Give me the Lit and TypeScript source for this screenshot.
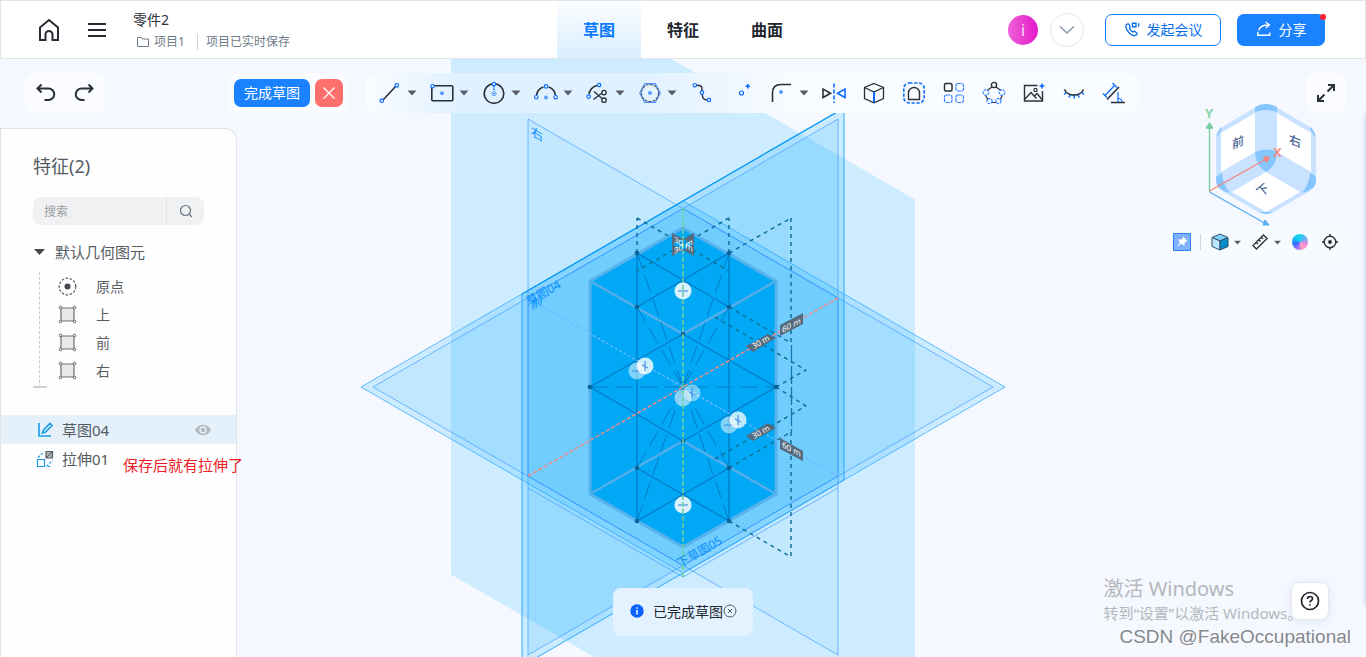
import { LitElement, html, svg, css } from "lit";
import { customElement } from "lit/decorators.js";
import { classMap } from "lit/directives/class-map.js";

const B = "#0a6cff";
const K = "#2b3038";

const dot = (x: number, y: number, r = 1.7) => svg`<circle cx=${x} cy=${y} r=${r} fill="#fff" stroke=${B} stroke-width="1.2"/>`;
const soft = (x: number, y: number) => svg`<circle cx=${x} cy=${y} r="2" fill="#5b9dfb" stroke="none"/>`;

interface Tool { name: string; label: string; menu?: boolean; art: unknown }

const tools: Tool[] = [
  { name: "line", label: "直线", menu: true, art: svg`<path d="M5 19 18 5"/>${dot(3.7, 19.8)}${dot(18.8, 4.4)}` },
  { name: "rect", label: "矩形", menu: true, art: svg`<rect x="1.8" y="4.8" width="21" height="15" rx="1"/>${soft(12, 12.2)}${dot(2.5, 5.2)}` },
  { name: "circle", label: "圆", menu: true, art: svg`<circle cx="12" cy="12.6" r="9.8"/><path d="M12 5v5" stroke=${B} stroke-dasharray="1.5 1"/>${dot(12, 3)}<circle cx="12" cy="12.6" r="2.1" stroke="#5b9dfb" stroke-width="1"/><circle cx="12" cy="12.6" r=".8" fill=${B} stroke="none"/>` },
  { name: "arc", label: "圆弧", menu: true, art: svg`<path d="M2.6 14A9.8 9.8 0 0 1 9.5 6M14.5 6a9.8 9.8 0 0 1 6.9 8"/>${dot(12, 5.4)}${dot(2.3, 16.2)}${dot(21.7, 16.2)}${soft(12, 16.4)}` },
  { name: "trim", label: "修剪", menu: true, art: svg`<path d="M3 13A11 11 0 0 1 11 4.6"/>${dot(13.2, 4)}${dot(2.6, 15.6)}<path d="m8 10.5 8 7M7.5 18.5 16 12" stroke-width="1.3"/><circle cx="18" cy="11.6" r="2.2" stroke-width="1.3"/><circle cx="18" cy="19.2" r="2.2" stroke-width="1.3"/>` },
  { name: "polygon", label: "多边形", menu: true, art: svg`<path d="M6.8 2.6h10.4l5 9.4-5 9.4H6.8L1.800 12Z" stroke="#4a93ff" stroke-width="1.3"/><circle cx="12" cy="12" r="8.6" stroke="#555c66" stroke-dasharray="3 1" stroke-width="1.2"/>${soft(12, 12)}` },
  { name: "spline", label: "样条", art: svg`<path d="M6 4.2c8 0 5.5 3 6 7.500C12.500 17 13 19 18 19" stroke-width="1.4"/>${dot(4.8, 4.2)}${dot(12, 11.6)}${dot(19, 19)}` },
  { name: "point", label: "点", art: svg`${dot(11.5, 12, 2)}<path d="M17.8 3v4.500M15.500 5.200H20" stroke=${B} stroke-width="1.6"/>` },
  { name: "fillet", label: "圆角", menu: true, art: svg`<path d="M2.500 21V12Q2.500 3.500 11 3.500h10"/>${soft(11, 11)}` },
  { name: "mirror", label: "镜像", art: svg`<path d="M1 8v8.500L8.500 12.200Z"/><path d="M23 8v8.500l-7.500-4.300Z" stroke=${B}/><path d="M12 2.500v19.500" stroke=${B} stroke-dasharray="4 2"/>` },
  { name: "solid", label: "投影", art: svg`<path d="M12 2.500 21.500 6.500v11L12 21.800 2.500 17.500v-11ZM2.500 6.500 12 11l9.500-4.500" stroke-width="1.300"/><path d="M12 11v10.500" stroke=${B} stroke-width="2"/>` },
  { name: "offset", label: "偏移", art: svg`<rect x="1.800" y="2" width="20.400" height="20" rx="5.500" stroke=${B} stroke-width="1.700" stroke-dasharray="3.200 1.700"/><path d="M6.500 18.500V12a5.500 5.500 0 0 1 11 0v6.500Z" stroke-width="1.400"/>` },
  { name: "pattern", label: "线性阵列", art: svg`<rect x="2.500" y="2.500" width="7.500" height="7.500" rx="1.500" stroke-width="1.500"/><g stroke="#2f7fff" stroke-width="1.200" stroke-dasharray="3.600 .8"><rect x="14" y="2.500" width="7.500" height="7.500" rx="2"/><rect x="2.500" y="14" width="7.500" height="7.500" rx="2"/><rect x="14" y="14" width="7.500" height="7.500" rx="2"/></g>` },
  { name: "polar", label: "圆周阵列", art: svg`<path d="M10 6 5 9.500M14 6l5 3.500M3.500 14 6 19M20.500 14 18 19M9.500 21.500h5" stroke-width="1.200"/><circle cx="12" cy="4" r="2.600" stroke-width="1.400"/><g stroke="#3b87ff" stroke-width="1.200" stroke-dasharray="2.600 .8"><circle cx="4" cy="11.500" r="2.800"/><circle cx="20" cy="11.500" r="2.800"/><circle cx="7.500" cy="20" r="2.600"/><circle cx="16.500" cy="20" r="2.600"/></g>` },
  { name: "image", label: "图片", art: svg`<path d="M15.500 4.500H2.500v15.500h18V10" stroke-width="1.400"/><path d="m3 18 6-6.500 5.500 6M12 15.500l3-3 5 6" stroke-width="1.400"/><circle cx="13.500" cy="9" r="1.600" stroke-width="1.200"/><path d="M20 2.500v5M17.500 5h5" stroke=${B}/>` },
  { name: "hide", label: "隐藏", art: svg`<path d="M2.500 8.500c3.500 7.500 15.500 7.500 19 0"/><path d="m4 11.500-2 2M8 14l-1 2.500M12.200 14.500v3M16.200 14l1 2.500M20 11.500l2 2" stroke=${B} stroke-width="1.500"/>` },
  { name: "measure", label: "尺寸", art: svg`<path d="m5 18.500 12-12.500M9 21.500h14"/><path d="m3 14.500 10-10.500M1 12.500l4 4M10.500 2l4.500 4.500M16 11v10M16 17q4 1 4 4" stroke=${B} stroke-width="1.200"/>` },
];

const caret = html`<svg class="caret" viewBox="0 0 12 12" aria-hidden="true"><path d="M1.500 3.500h9L6 8.500Z" /></svg>`;

const seg = (pts: number[][]) => pts.map(([a, b, c, d]) => `M${a} ${b}L${c} ${d}`).join("");

const nodes = [
  [637, 253], [729, 253], [637, 307], [729, 307], [683, 334], [590, 387],
  [776, 387], [683, 441], [637, 468], [729, 468], [637, 521], [729, 521],
];

const edges = seg([
  [637, 253, 637, 521], [729, 253, 729, 521], [637, 253, 729, 307], [729, 253, 637, 307],
  [590, 387, 683, 334], [683, 334, 776, 387], [590, 387, 683, 441], [683, 441, 776, 387],
  [637, 468, 729, 521], [729, 468, 637, 521],
]);

const guides = seg([
  [683, 387, 637, 253], [683, 387, 729, 253], [683, 387, 637, 307], [683, 387, 729, 307],
  [683, 387, 637, 468], [683, 387, 729, 468], [683, 387, 637, 521], [683, 387, 729, 521],
  [590, 387, 776, 387],
]);

const dims = seg([
  [637, 253, 637, 218], [637, 218, 729, 271], [729, 253, 729, 218], [729, 218, 637, 271],
  [729, 253, 791, 218], [791, 218, 791, 345], [729, 307, 791, 343],
  [715, 317, 806, 370], [776, 387, 806, 370], [776, 387, 806, 406], [715, 459, 806, 406],
  [729, 468, 791, 432], [791, 432, 791, 557], [729, 521, 791, 557],
]);

const marks: [number, number, number, string][] = [
  [637, 371, 0.5, "h"], [645, 366, 0.8, "v"], [692, 393, 0.45, "v"], [683, 398, 0.55, ""],
  [729, 425, 0.5, "h"], [738, 420, 0.75, "v"], [683, 291, 0.85, "h"], [683, 505, 0.85, "h"],
];

const scene = svg`
  <g fill="#00aaff">
    <path d="M451-68 915 199.500V842L451 574.500Z" fill-opacity=".155"/>
    <path d="M528 119 838 298V655L528 476Z" fill-opacity=".055"/>
    <g stroke="#2fa8fb" stroke-width="1">
      <path d="M522 294 844 108V480L522 666Z" fill-opacity=".17"/>
      <path d="M361 387 683 201l322 186L683 573Z" fill-opacity=".16" stroke-opacity=".75"/>
    </g>
    <path d="M528 298 838 119V476L528 655Z" fill-opacity=".1"/>
    <path d="M373 387 683 208.500 993 387 683 565.500Z" fill-opacity=".055"/>
  </g>
  <g fill="none" stroke="#2b93ff" stroke-opacity=".6">
    <path d="M528 119 838 298V655L528 476Z"/>
    <path d="M528 298 838 119V476L528 655Z"/>
    <path d="M373 387 683 208.500 993 387 683 565.500Z"/>
    <path d="M528 488 683 577 838 488"/>
  </g>
  <path d="M522 294 844 108" stroke="#0e9cf5" stroke-width="1.300"/>
  <path d="M683 228 776 281V494L683 547 590 494V281Z" fill="#00a8f5" stroke="#55b2ec" stroke-width="3"/>
  <path d="M590 281 683 334 776 281M590 494 683 441 776 494" fill="none" stroke="#55aee9" stroke-width="2.500"/>
  <path d=${edges} stroke="#067cc4" stroke-width="1.300" fill="none"/>
  <path d=${guides} stroke="#067cc4" stroke-width="1" stroke-dasharray="18 7" fill="none"/>
  <path d="M791.500 345V432" stroke="#0f79b0" stroke-width="1.300" stroke-dasharray="18 3"/>
  <path d=${dims} stroke="#0f7399" stroke-width="1.500" stroke-dasharray="4 4" fill="none"/>
  <path d="M528 298 838 476" stroke="#6fb9ff" stroke-width="1.300" stroke-dasharray="3 2"/>
  ${nodes.map(([x, y]) => svg`<circle cx=${x} cy=${y} r="2.300" fill="#07639c"/>`)}
  ${marks.map(([x, y, o, k]) => svg`
    <circle cx=${x} cy=${y} r="8.500" fill="#fff" fill-opacity=${o}/>
    ${k ? svg`<path d=${k === "h" ? `M${x - 5} ${y}h10` : `M${x} ${y - 5}v10M${x - 3} ${y - 1}l6 3`} stroke="#4a93e0" stroke-width="1.200"/>` : null}`)}
  <path d="M528 476 838 298" stroke="#f58a83" stroke-width="1.500" stroke-dasharray="4 2"/>
  <path d="M683 208V577" stroke="#6fd09c" stroke-width="1.600" stroke-dasharray="5 2"/>
  <g fill="#566b7e">
    <path d="m672 233 22 12v11l-22-12ZM672 256l22-12v-11l-22 12Z"/>
    <path d="M780 325 803 313v11l-23 12Z"/>
    <path d="m746 346 22-12 8 4-23 14Z"/>
    <path d="m746 436 22-13 8 5-23 13Z"/>
    <path d="m780 438 23 13v10l-23-12Z"/>
  </g>
  <g class="dim">
    <text transform="translate(674 242) skewY(28)">30 m</text>
    <text transform="translate(674 254) skewY(-28)">30 m</text>
    <text transform="translate(782 333) skewY(-28)">60 m</text>
    <text transform="translate(782 447) skewY(28)">60 m</text>
    <text transform="translate(754 349) rotate(-30)">30 m</text>
    <text transform="translate(754 439) rotate(-30)">30 m</text>
  </g>
  <g class="plane">
    <text transform="translate(531 135) skewY(30)">右</text>
    <text transform="translate(531 310) skewY(-30)">前</text>
    <text transform="translate(529 306) rotate(-30)">草图04</text>
    <text transform="translate(680 568) rotate(-30)">下草图05</text>
  </g>`;

const cube = svg`
  <path d="M1265 104q6 0 11 3l34 20q6 4 6 11v42q0 7-6 11l-36 21q-8 3-16 0l-36-21q-6-4-6-11v-42q0-7 6-11l34-20q4-3 9-3Z" fill="#c9e2ff"/>
  <path d="M1255 107q10-6 22 0v5q-11-4-22 0ZM1217 134l4-7 1 2-5 8ZM1315 134l-4-7-1 2 5 8ZM1259 212q7 4 14 0Z" fill="#85c6ff"/>
  <path d="M1216 177q3-3 6-4 1 12 8 20-7-2-12-6-2-3-2-10ZM1316 177q-3-3-6-4-1 12-8 20 7-2 12-6 2-3 2-10Z" fill="#85c6ff"/>
  <path d="M1221 133 1255 113v39l-34 20ZM1311 133l-34-20v39l34 20ZM1232 192l34-20 34 20-34 20Z" fill="#fff"/>
  <path d="M1255 152q11-5 22 0 0 13-11 20-11-7-11-20Z" fill="#85c6ff"/>
  <g class="face">
    <text transform="translate(1232 149) skewY(-22)">前</text>
    <text transform="translate(1289 143) skewY(22)">右</text>
    <text transform="translate(1261 197) rotate(-40)">下</text>
  </g>
  <path d="M1209.500 192V126" stroke="#74d09d" stroke-width="1.400"/><path d="m1209.500 122 4 6-2 1h-4l-2-1Z" fill="#74d09d"/>
  <path d="m1209.500 191 55-31" stroke="#f4857e" stroke-width="1.400"/><path d="m1270 157-7-1 1 4 3 3Z" fill="#f4857e"/>
  <path d="m1209.500 192 55 31" stroke="#57aef5" stroke-width="1.400"/><path d="m1265 220-2 5h6Z" stroke="#57aef5" fill="#57aef5"/>
  <text class="axis" x="1205" y="118" fill="#8bd3ab">Y</text>
  <text class="axis" x="1273" y="157" fill="#f08f8c">X</text>`;

@customElement("app-header")
class AppHeader extends LitElement {
  static styles = css`
    :host { display: block; }
    * { box-sizing: border-box; }
    header { display: grid; grid-template-columns: 1fr auto 1fr; height: 59px; background: #fff; border: 1px solid #e3e4e6; }
    button, a { font: inherit; color: inherit; border: 0; background: none; padding: 0; cursor: pointer; text-decoration: none; }
    svg { fill: none; stroke: #262b33; stroke-width: 2; display: block; }
    .left { display: flex; align-items: center; padding-left: 36px; }
    .ico { width: 24px; height: 24px; margin-right: 24px; }
    .doc { padding-top: 2px; }
    .name { font-size: 14px; line-height: 22px; color: #2d3239; }
    .meta { display: flex; align-items: center; font-size: 12px; line-height: 22px; color: #6f7b88; }
    .meta svg { width: 12px; height: 12px; margin: 0 5px 0 4px; stroke: #6f7b88; stroke-width: 1; }
    .saved { margin-left: 12px; padding-left: 8px; border-left: 1px solid #cfd3d8; line-height: 16px; }
    nav { display: flex; }
    .tab { width: 84px; padding-bottom: 2px; display: flex; align-items: center; justify-content: center; font-size: 16px; font-weight: 700; color: #22262d; }
    .tab.on { color: #0a7aff; background: linear-gradient(#fbfdff, #d9eeff); }
    .right { display: flex; align-items: center; justify-content: flex-end; padding-right: 40px; }
    .avatar { width: 30px; height: 30px; border-radius: 50%; background: linear-gradient(90deg, #ee60d6, #e31bcb); color: #f8dcf5; font-size: 16px; text-align: center; line-height: 30px; }
    .more { width: 34px; height: 34px; border: 1px solid #e3e7ee; border-radius: 50%; margin: 0 21px 0 12px; display: grid; place-items: center; }
    .more svg { width: 16px; height: 16px; stroke: #8698ad; stroke-width: 1.5; }
    .btn { display: flex; align-items: center; justify-content: center; height: 32px; padding: 0 0 2px; border-radius: 7px; font-size: 14px; gap: 7px; }
    .btn svg { width: 16px; height: 16px; stroke: currentColor; stroke-width: 1.5; }
    .meet { width: 116px; border: 1px solid #0a7aff; color: #0a6fe8; }
    .share { width: 88px; background: #1b82ff; color: #fff; margin-left: 16px; position: relative; }
    .badge { position: absolute; top: 0; right: -1px; width: 6px; height: 6px; border-radius: 50%; background: #ff1f2d; }
  `;
  render() {
    return html`<header>
      <div class="left">
        <a class="ico" href="#" aria-label="主页"><svg viewBox="0 0 24 24"><path d="M3 9.500 12 2l9 7.500V22h-5.500v-5.500a3.500 3.500 0 0 0-7 0V22H3Z"/></svg></a>
        <button class="ico" aria-label="菜单"><svg viewBox="0 0 24 24"><path d="M3 6h18M3 12h18M3 18h18"/></svg></button>
        <div class="doc">
          <div class="name">零件2</div>
          <div class="meta"><svg viewBox="0 0 12 12"><path d="M.500 1.500h4l1 1.500h6v7.500H.500Z"/></svg>项目1<span class="saved">项目已实时保存</span></div>
        </div>
      </div>
      <nav>
        ${["草图", "特征", "曲面"].map((t, i) => html`<a href="#" class=${classMap({ tab: true, on: i === 0 })}>${t}</a>`)}
      </nav>
      <div class="right">
        <div class="avatar">i</div>
        <button class="more" aria-label="更多"><svg viewBox="0 0 16 16"><path d="m1 4.500 7 6.500 7-6.500"/></svg></button>
        <button class="btn meet"><svg viewBox="0 0 18 18"><path d="M3.500 3.500C1 5 2 9 5 12.500s6.500 5 9 3c1-.900.800-1.500 0-2.300l-1.700-1.400c-.800-.600-1.400-.300-2.300.500C8.500 11.800 6.500 9.500 6 8.200c1-.8 1.200-1.300.8-2.200l-1-2c-.5-.8-1.300-1-2.300-.5Z"/><path d="M9.500 2.500h4v4h-4ZM16.500 2.500v4"/></svg>发起会议</button>
        <button class="btn share"><svg viewBox="0 0 18 18"><path d="M2 12v4h13.500v-3M3 10.500c1-4 4.500-6 11.500-6M11 1l4 3.500L11 8"/></svg>分享<span class="badge"></span></button>
      </div>
    </header>`;
  }
}

@customElement("feature-panel")
class FeaturePanel extends LitElement {
  static styles = css`
    :host { display: block; box-sizing: border-box; background: rgba(255, 255, 255, 0.85); border: 1px solid #e0e2e6; border-bottom: 0; border-top-right-radius: 12px; color: #555b61; }
    * { box-sizing: border-box; }
    svg { display: block; flex: none; }
    h2 { margin: 23px 0 17px 32px; font-size: 18px; line-height: 28px; font-weight: 400; }
    .search { display: flex; height: 28px; margin: 0 32px; background: #f0f1f3; border-radius: 8px; overflow: hidden; }
    input { flex: 1; min-width: 0; border: 0; background: none; padding: 0 11px; font: inherit; font-size: 12px; outline: 0; }
    input::placeholder { color: #9b9fa5; opacity: 1; }
    .go { width: 38px; border: 0; border-left: 1px solid #dfe2e6; background: none; display: grid; place-items: center; padding: 0; }
    .go svg { width: 14px; height: 14px; fill: none; stroke: #667587; stroke-width: 1.2; }
    .group { display: flex; align-items: center; gap: 10px; margin: 15px 0 8px 32px; font-size: 15px; line-height: 24px; }
    .group svg { width: 12px; height: 12px; fill: #444a50; }
    .tree { margin: 0 0 27px 38px; padding: 0 0 4px; list-style: none; border-left: 1px dashed #c9cccf; position: relative; }
    .tree::after { content: ""; position: absolute; left: -7px; bottom: 0; width: 14px; height: 2px; background: #cdd0d3; }
    .tree li { display: flex; align-items: center; gap: 19px; height: 28px; padding-left: 18px; font-size: 14px; }
    .tree svg { width: 19px; height: 19px; }
    .steps { margin: 0; padding: 0; list-style: none; }
    .steps li { display: flex; align-items: center; height: 29px; padding: 0 24px 0 35px; gap: 8px; font-size: 15px; }
    .steps li.on { background: #e4f1fb; }
    .steps svg { width: 18px; height: 18px; fill: none; stroke: #1b9de8; stroke-width: 1.4; }
    .steps .eye { margin-left: auto; fill: #b3b8bd; stroke: none; }
  `;
  render() {
    const face = svg`<path d="M3 3h13v13H3Z" fill="#e8eaea" stroke="#6d7173" stroke-width="1.200"/><g fill="#fff" stroke="#5b5f62"><circle cx="2.500" cy="2.500" r="1.300"/><circle cx="16.500" cy="2.500" r="1.300"/><circle cx="2.500" cy="16.500" r="1.300"/><circle cx="16.500" cy="16.500" r="1.300"/></g>`;
    const origin = svg`<circle cx="9.500" cy="9.500" r="8.300" fill="none" stroke="#555b61" stroke-width="1.200" stroke-dasharray="2.500 1.600"/><circle cx="9.500" cy="9.500" r="3" fill="#444a50"/>`;
    return html`
      <h2>特征(2)</h2>
      <div class="search">
        <input type="text" placeholder="搜索" aria-label="搜索" />
        <button class="go" aria-label="搜索"><svg viewBox="0 0 14 14"><circle cx="6.500" cy="6.500" r="5"/><path d="m10.500 10.500 2.500 2.500"/></svg></button>
      </div>
      <div class="group"><svg viewBox="0 0 12 12"><path d="M1 3h11L6.500 9Z"/></svg>默认几何图元</div>
      <ul class="tree">
        ${["原点", "上", "前", "右"].map((t, i) => html`<li><svg viewBox="0 0 19 19">${i ? face : origin}</svg>${t}</li>`)}
      </ul>
      <ul class="steps">
        <li class="on"><svg viewBox="0 0 18 18"><path d="M3 2v13h12M6.500 12l1-3 6.500-6.500 2 2L9.500 11Z" stroke-width="1.600"/></svg>草图04
          <svg class="eye" viewBox="0 0 18 18"><path d="M1 9c3.500-7 12.500-7 16 0-3.500 7-12.500 7-16 0Z"/><circle cx="9" cy="9" r="3.700" fill="#e4f1fb"/><circle cx="9" cy="9" r="2.200"/></svg></li>
        <li><svg viewBox="0 0 18 18"><path d="M1.500 9.500h7v7h-7Z" stroke-width="1.200"/><path d="M10 1.500h6.500V8H10Z" fill="#aab2b8" stroke="#555b61" stroke-width="1.200"/><path d="M2 7.500 8 2M10.500 16.500l6-6M12 16.500h4" stroke-dasharray="2.500 1.500" stroke-width="1.200"/><path d="M10 8l6-6" stroke="#555b61" stroke-width="1"/></svg>拉伸01</li>
      </ul>`;
  }
}

@customElement("app-root")
class AppRoot extends LitElement {
  static styles = css`
    :host { display: flex; flex-direction: column; height: 100vh; overflow: hidden; background: #f5f8ff; font-family: "Noto Sans", "Noto Sans CJK SC", sans-serif; }
    * { box-sizing: border-box; }
    button { font: inherit; border: 0; background: none; padding: 0; cursor: pointer; }
    .stage { flex: 1; position: relative; min-height: 0; overflow: hidden; display: flex; flex-direction: column; }
    .scene { position: absolute; inset: 0; width: 100%; height: 100%; }
    .dim { fill: #fff; font-size: 8px; }
    .plane { fill: #0a90fb; font-size: 12px; }
    .face { fill: #4b6795; font-size: 12px; font-weight: 500; }
    .axis { font-size: 13px; font-weight: 700; }
    .bar { position: relative; display: flex; padding: 14px 20px 0 25px; }
    .box { display: flex; align-items: center; height: 40px; border-radius: 10px; background: rgba(255, 255, 255, 0.6); }
    .history { width: 80px; justify-content: space-around; padding: 0 2px; }
    .history svg, .full svg { width: 22px; height: 22px; display: block; fill: none; stroke: #2b3038; stroke-width: 2; }
    .finish { margin-left: 124px; padding: 0 5px; gap: 5px; }
    .done { width: 76px; height: 28px; padding-bottom: 2px; border-radius: 7px; background: #1b82ff; color: #fff; font-size: 14px; }
    .cancel { width: 28px; height: 28px; border-radius: 7px; background: #ff6f6b; display: grid; place-items: center; }
    .cancel svg { width: 14px; height: 14px; stroke: #fff; stroke-width: 1.3; }
    .tools { margin-left: 18px; padding: 0 4px; background: linear-gradient(90deg, #fafcff, #e0f1ff 12%, #e0f1ff 35%, #f8fbff 55%); }
    .tool { display: flex; align-items: center; width: 40px; padding: 0 8px; height: 40px; }
    .tool.menu { width: 52px; padding-right: 4px; gap: 4px; }
    .tool > svg:first-child { width: 24px; height: 24px; fill: none; stroke: #2b3038; stroke-width: 1.6; flex: none; }
    .caret { width: 12px; height: 12px; fill: #575d66; flex: none; }
    .full { width: 40px; justify-content: center; margin-left: auto; }
    .views { position: absolute; right: 20px; top: 167px; height: 32px; display: flex; align-items: center; padding: 0 7px; background: rgba(246, 251, 255, 0.9); border-radius: 8px; }
    .views button { display: flex; align-items: center; height: 32px; }
    .views button > svg:first-child { width: 18px; height: 18px; display: block; }
    .views .caret { width: 9px; height: 9px; }
    .drop { gap: 4px; margin-right: 9px; }
    .pin { margin-right: 9px; }
    .rule { width: 1px; height: 16px; background: #d3d8de; margin-right: 10px; }
    .wheel { width: 16px; height: 16px; border-radius: 50%; background: conic-gradient(#19d7f0, #62aef5, #f08be0, #ff9fc0 45%, #a070f5 55%, #2a6cff 70%, #12c9f8 85%, #19d7f0); margin: 0 13px 0 1px; }
    .panel { position: relative; width: 237px; margin-top: 15px; flex: 1; min-height: 0; }
    .note { position: absolute; left: 123px; top: 395px; margin: 0; font-size: 15px; line-height: 22px; color: #ee1c25; }
    .toast { position: absolute; left: 50%; transform: translateX(-50%); bottom: 21px; height: 48px; padding: 0 16px 2px; display: flex; align-items: center; border-radius: 8px; background: #e4f2ff; color: #20252c; font-size: 14px; white-space: nowrap; }
    .toast svg { width: 14px; height: 14px; display: block; }
    .toast .info { margin-right: 8px; width: 16px; height: 16px; }
    .marks { position: absolute; right: 15px; bottom: 8px; text-align: left; color: #b4b7bc; white-space: nowrap; display: flex; flex-direction: column; }
    .marks p { margin: 0; }
    .m1 { font-size: 20px; line-height: 24px; }
    .m2 { font-size: 15px; line-height: 24px; }
    .m3 { font-family: "Liberation Sans", sans-serif; font-size: 19px; line-height: 24px; color: #85888d; text-shadow: 1px 1px 0 #fff; padding-left: 16px; }
    .help { position: absolute; right: 37px; bottom: 37px; width: 38px; height: 38px; background: #fff; border: 1px solid #e6e8ec; border-radius: 8px; display: grid; place-items: center; box-shadow: 0 2px 8px rgba(70, 110, 180, 0.12); }
    .help svg { width: 20px; height: 20px; fill: none; stroke: #20252c; stroke-width: 1.7; }
    .drawer { position: absolute; right: -4px; top: 54px; bottom: 52px; width: 4px; box-shadow: -1px 0 4px rgba(80, 150, 220, 0.3); }
  `;
  render() {
    return html`
      <app-header></app-header>
      <main class="stage">
        <svg class="scene" viewBox="0 59 1366 598" preserveAspectRatio="xMidYMid slice">${scene}</svg>
        <svg class="scene" viewBox="0 59 1366 598" preserveAspectRatio="xMaxYMin slice">${cube}</svg>
        <div class="bar">
          <div class="box history">
            <button aria-label="撤销"><svg viewBox="0 0 22 22"><path d="M6.500 2.500 2.500 6.500l4 4M3 6.500h10.500a5.500 5.500 0 0 1 0 11.500H9.500"/></svg></button>
            <button aria-label="重做"><svg viewBox="0 0 22 22"><path d="m15.500 2.500 4 4-4 4M19 6.500H8.500a5.500 5.500 0 0 0 0 11.500h3"/></svg></button>
          </div>
          <div class="box finish">
            <button class="done">完成草图</button>
            <button class="cancel" aria-label="取消"><svg viewBox="0 0 14 14"><path d="m1.500 1.500 11 11M12.500 1.500l-11 11"/></svg></button>
          </div>
          <div class="box tools">
            ${tools.map((t) => html`<button class=${classMap({ tool: true, menu: !!t.menu })} aria-label=${t.label}><svg viewBox="0 0 24 24">${t.art}</svg>${t.menu ? caret : null}</button>`)}
          </div>
          <button class="box full" aria-label="全屏"><svg viewBox="0 0 22 22"><path d="M13 3h6v6M18.500 3.500l-6 6M9 19H3v-6M3.500 18.500l6-6"/></svg></button>
        </div>
        <feature-panel class="panel"></feature-panel>
        <p class="note">保存后就有拉伸了</p>
        <div class="views">
          <button class="pin" aria-label="固定"><svg viewBox="0 0 18 18"><path d="M.500.500h17v17H.500Z" fill="#80b1ff" stroke="#2a84ff"/><path d="m10 3.500 4.500 4.500-1.500.500-1.500 1.500v3l-3-2.500L4 14l3-4.500L5 6.500h3.500L10 5Z" fill="#fff"/></svg></button>
          <span class="rule"></span>
          <button class="drop" aria-label="显示"><svg viewBox="0 0 18 18" stroke="#355064" stroke-linejoin="round"><path d="m9 1 8 3.500L9 8 1 4.500Z" fill="#7ed0fa"/><path d="M1 4.500 9 8v9l-8-3.500Z" fill="#b8e6ff"/><path d="M17 4.500 9 8v9l8-3.500Z" fill="#0a8bcc"/></svg>${caret}</button>
          <button class="drop" aria-label="测量"><svg viewBox="0 0 18 18" fill="none" stroke=${K} stroke-width="1.400"><path d="M2 12.500 12.500 2 16 5.500 5.500 16ZM5.500 9.500l1.500 1.500M8 7l1.500 1.500M10.500 4.500 12 6"/></svg>${caret}</button>
          <button aria-label="颜色"><span class="wheel"></span></button>
          <button aria-label="居中"><svg viewBox="0 0 18 18" fill="none" stroke=${K} stroke-width="1.400"><circle cx="9" cy="9" r="5.800"/><circle cx="9" cy="9" r="1.200" fill=${K}/><path d="M9 1v3M9 14v3M1 9h3M14 9h3"/></svg></button>
        </div>
        <div class="toast" role="status">
          <svg class="info" viewBox="0 0 16 16"><circle cx="8" cy="8" r="6.700" fill="#0a62ff"/><path d="M8 7v4.500M8 4.300v1.500" stroke="#fff" stroke-width="1.500"/></svg>
          已完成草图
          <button aria-label="关闭"><svg viewBox="0 0 14 14" fill="none" stroke="#555b61"><circle cx="7" cy="7" r="6"/><path d="m5 5 4 4M9 5l-4 4"/></svg></button>
        </div>
        <div class="drawer"></div>
        <button class="help" aria-label="帮助"><svg viewBox="0 0 20 20"><circle cx="10" cy="10" r="8.500"/><path d="M7.500 8q0-2.500 2.500-2.500t2.500 2.200c0 1.800-2.500 1.800-2.500 3.800M10 13.200v1.500"/></svg></button>
        <div class="marks">
          <p class="m1">激活 Windows</p>
          <p class="m2">转到“设置”以激活 Windows。</p>
          <p class="m3">CSDN @FakeOccupational</p>
        </div>
      </main>`;
  }
}
